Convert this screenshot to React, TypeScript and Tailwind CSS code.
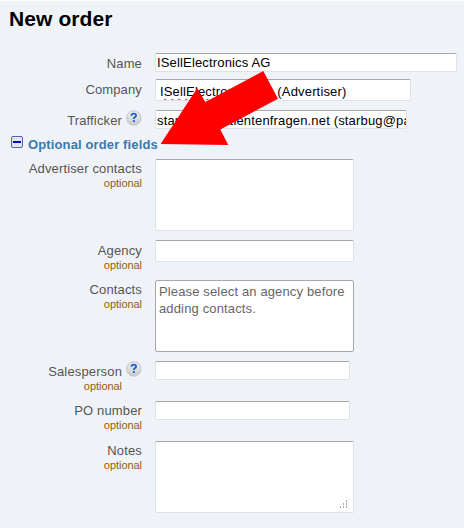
import type { ReactNode } from 'react';

interface FieldRowProps {
  label: string;
  optional?: boolean;
  help?: boolean;
  className: string;
  children: ReactNode;
}

const HelpIcon = () => (
  <svg className="block h-4 w-4" viewBox="0 0 16 16">
    <defs>
      <linearGradient id="help" x1="0" y1="0" x2="0" y2="1">
        <stop offset="0" stopColor="#f1f1f1" />
        <stop offset="1" stopColor="#c9c9c9" />
      </linearGradient>
    </defs>
    <circle cx="7.8" cy="8" r="7.2" fill="url(#help)" stroke="#c2c3c6" />
    <path d="M5.5 5.8V5.2C5.5 4 6.4 3.6 7.8 3.6S10.1 4.1 10.1 5.5C10.1 7 7.8 7.1 7.8 8.9" fill="none" stroke="#1b63d0" strokeWidth="1.8" />
    <path d="M6.9 10.1h1.9v1.9H6.9z" fill="#1b63d0" />
  </svg>
);

const FieldRow = ({ label, optional, help, className, children }: FieldRowProps) => (
  <div className={`flex items-start ${className}`}>
    <div className="flex w-[142px] shrink-0 justify-end">
      <div className="text-right">
        <div className="text-[13px] leading-4 tracking-[0.14px] whitespace-nowrap text-[#555]">{label}</div>
        {optional && <div className="text-[11px] leading-3 tracking-[-0.05px] text-[#965c0c]">optional</div>}
      </div>
      {help && (
        <div className="-mt-[3px] ml-1">
          <HelpIcon />
        </div>
      )}
    </div>
    <div className="ml-[13px]">{children}</div>
  </div>
);

const inputStyle = 'overflow-hidden whitespace-nowrap rounded-[2px] border border-[#dde1ea] border-t-[#a7a7ab] bg-white text-[13px] tracking-[0.16px] text-black';

const App = () => {
  return (
    <div className="relative h-[528px] w-[464px] overflow-hidden border-t border-white bg-[#eff3f8] font-['Liberation_Sans',Arial,sans-serif]">
      <h1 className="h-[52px] pt-[6px] pl-[9px] text-[21px] leading-6 font-bold tracking-[0.1px] text-black">New order</h1>

      <FieldRow label="Name" className="h-[26px] *:first:pt-[3px]">
        <div className={`${inputStyle} h-[19px] w-[302px] pl-px leading-[17px]`}>ISellElectronics AG</div>
      </FieldRow>
      <FieldRow label="Company" className="h-[31px] *:first:pt-[3px]">
        <div className={`${inputStyle} h-[22px] w-[256px] pl-[4px] leading-[23px]`}>
          <span className="underline decoration-[#e33] decoration-wavy decoration-[0.7px] underline-offset-2">ISellElectronics</span> AG (Advertiser)
        </div>
      </FieldRow>
      <FieldRow label="Trafficker" help className="h-[25px] *:first:pt-[3px]">
        <div className={`${inputStyle} h-[19px] w-[252px] pl-px leading-[19px]`}>
          starbug@patientenfragen.net (starbug@pa
        </div>
      </FieldRow>

      {/* Collapsible section header */}
      <div className="flex h-6 items-start pl-[11px]">
        <svg className="mt-px h-3 w-3" viewBox="0 0 12 12">
          <rect x="0.5" y="0.5" width="11" height="11" rx="1.5" fill="#e3e5f3" stroke="#5560ae" />
          <path d="M2 6h8" stroke="#0000c8" strokeWidth="2" />
        </svg>
        <h2 className="ml-[5px] pt-0.5 text-[13px] leading-4 font-bold tracking-[0.13px] text-[#3a78ad]">Optional order fields</h2>
      </div>

      <FieldRow label="Advertiser contacts" optional className="h-[81px] *:first:pt-0.5">
        <div className={`${inputStyle} h-[72px] w-[199px]`} />
      </FieldRow>
      <FieldRow label="Agency" optional className="h-10 *:first:pt-[3px]">
        <div className={`${inputStyle} h-[22px] w-[199px]`} />
      </FieldRow>
      <FieldRow label="Contacts" optional className="h-[81px] *:first:pt-0.5">
        <div className="h-[72px] w-[199px] rounded-[2px] border border-[#a7a7ab] bg-white pt-[2px] pl-[3px] text-[13px] leading-[17px] tracking-[0.14px] text-[#666]">
          Please select an agency before adding contacts.
        </div>
      </FieldRow>
      <FieldRow label="Salesperson" optional help className="h-10 *:first:pt-[3px]">
        <div className={`${inputStyle} h-[19px] w-[195px]`} />
      </FieldRow>
      <FieldRow label="PO number" optional className="h-10 *:first:pt-0.5">
        <div className={`${inputStyle} h-[19px] w-[195px]`} />
      </FieldRow>
      <FieldRow label="Notes" optional className="h-[72px] *:first:pt-0.5">
        <div className={`${inputStyle} flex h-[72px] w-[199px] items-end justify-end pr-[5px] pb-1`}>
          <svg className="h-2 w-2" viewBox="0 0 8 8" fill="#aaa">
            <path d="M6 0h1v2H6zM3 3h1v2H3zM6 3h1v2H6zM0 6h1v2H0zM3 6h1v2H3zM6 6h1v2H6z" />
          </svg>
        </div>
      </FieldRow>

      {/* Arrow pointing at the section header */}
      <svg className="absolute top-[69px] left-[160px] h-[77px] w-[120px]" viewBox="160 70 120 77">
        <path d="M160.6 144 197.3 88 205.3 102 263.3 71 278 98.7 220.3 129.5 228.3 145Z" fill="#f00" />
      </svg>
    </div>
  );
};

export default App;
